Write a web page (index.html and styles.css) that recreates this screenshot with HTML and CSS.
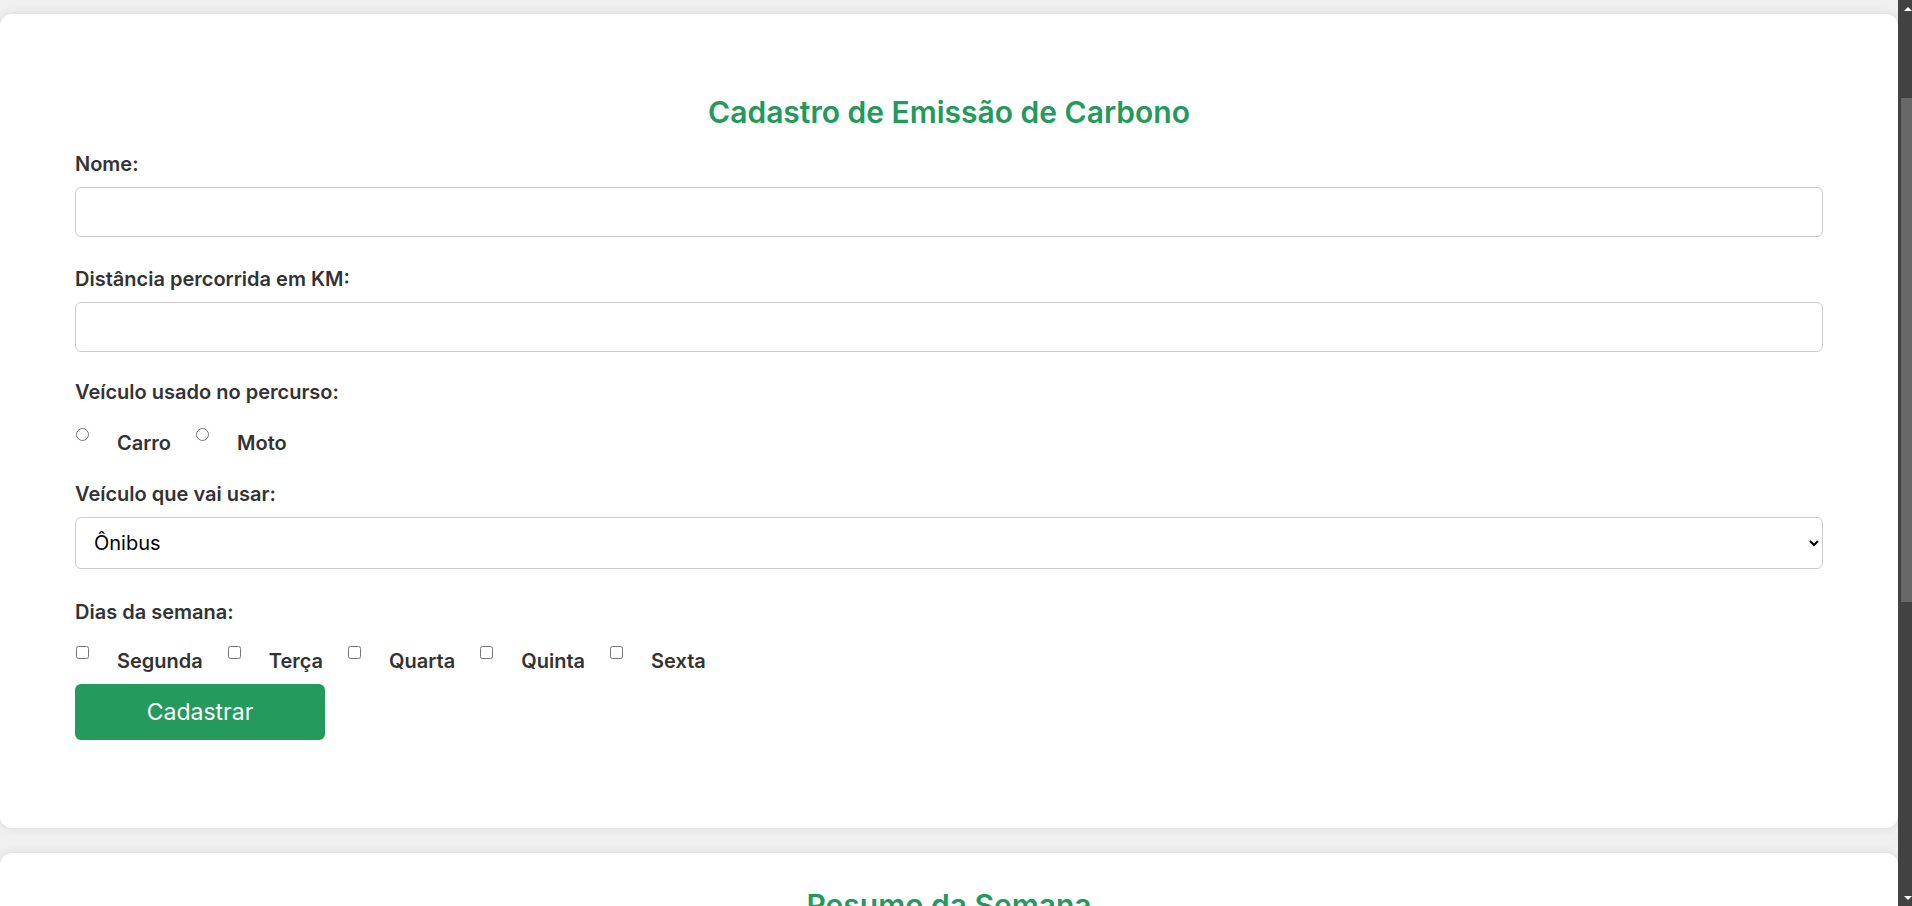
FILE: index.html
```html
<!DOCTYPE html>
<html lang="pt-BR">
<head>
<meta charset="utf-8">
<title>Cadastro de Emissão de Carbono</title>
<link rel="stylesheet" href="styles.css">
</head>
<body>
<div class="page">
  <section class="card form-card">
    <h2 class="title">Cadastro de Emissão de Carbono</h2>
    <form class="form">
      <label class="field-label label-first" for="nome">Nome:</label>
      <input class="text-input" type="text" id="nome">

      <label class="field-label label-gap" for="dist">Distância percorrida em KM:</label>
      <input class="text-input" type="text" id="dist">

      <span class="field-label label-gap-sm">Veículo usado no percurso:</span>
      <div class="choice-row radio-row">
        <input class="choice" type="radio" name="veiculo" id="carro">
        <label class="choice-label" for="carro">Carro</label>
        <input class="choice" type="radio" name="veiculo" id="moto">
        <label class="choice-label" for="moto">Moto</label>
      </div>

      <label class="field-label" for="usar">Veículo que vai usar:</label>
      <select class="select-input" id="usar">
        <option>Ônibus</option>
      </select>

      <span class="field-label label-gap-lg">Dias da semana:</span>
      <div class="choice-row check-row">
        <input class="choice" type="checkbox" id="seg">
        <label class="choice-label" for="seg">Segunda</label>
        <input class="choice" type="checkbox" id="ter">
        <label class="choice-label" for="ter">Terça</label>
        <input class="choice" type="checkbox" id="qua">
        <label class="choice-label" for="qua">Quarta</label>
        <input class="choice" type="checkbox" id="qui">
        <label class="choice-label" for="qui">Quinta</label>
        <input class="choice" type="checkbox" id="sex">
        <label class="choice-label" for="sex">Sexta</label>
      </div>

      <button class="submit" type="button">Cadastrar</button>
    </form>
  </section>

  <section class="card summary-card">
    <h2 class="title summary-title">Resumo da Semana</h2>
  </section>
</div>
<div class="scrollbar" aria-hidden="true">
  <div class="sb-button"><span class="sb-arrow sb-up"></span></div>
  <div class="sb-track"><div class="sb-thumb"></div></div>
  <div class="sb-button"><span class="sb-arrow sb-down"></span></div>
</div>
</body>
</html>
```

FILE: styles.css
```css
html,
body {
  height: 100%;
}

body {
  margin: 0;
  display: flex;
  overflow: hidden;
  background: #f0f0f0;
  font-family: Inter, "Noto Sans", "Liberation Sans", sans-serif;
  color: #333333;
}

.page {
  flex: 1;
  min-width: 0;
  height: 100vh;
  overflow: hidden;
  padding-top: 14px;
  box-sizing: border-box;
  background: #f0f0f0;
}

/* window scrollbar */
.scrollbar {
  flex: none;
  width: 14px;
  height: 100vh;
  display: flex;
  flex-direction: column;
  background: #424242;
}

.sb-button {
  flex: none;
  height: 17px;
  display: flex;
  align-items: center;
  justify-content: flex-end;
}

.sb-arrow {
  width: 0;
  height: 0;
  border-left: 4px solid transparent;
  border-right: 4px solid transparent;
}

.sb-up {
  border-bottom: 4px solid #ffffff;
  margin-top: 1px;
}

.sb-down {
  border-top: 4px solid #ffffff;
  margin-top: 1px;
}

.sb-track {
  flex: 1;
  display: flex;
  flex-direction: column;
  padding-left: 3px;
}

.sb-thumb {
  margin-top: 81px;
  height: 504px;
  background: #686868;
}

.card {
  background: #ffffff;
  border-radius: 12px;
  box-shadow: 0 0 10px rgba(0, 0, 0, 0.1);
}

.form-card {
  padding: 79px 75px 88px;
}

.summary-card {
  box-sizing: border-box;
  margin-top: 25px;
  padding: 33px 75px 0;
  min-height: 689px;
}

.title {
  margin: 0;
  text-align: center;
  color: #23995b;
  font-size: 30px;
  line-height: 39px;
  font-weight: 600;
}

.form {
  display: flex;
  flex-direction: column;
  align-items: stretch;
}

.field-label {
  display: block;
  font-size: 20px;
  line-height: 24px;
  font-weight: 600;
  color: #333333;
  margin-bottom: 11px;
}

.label-first {
  margin-top: 20px;
}

.label-gap {
  margin-top: 30px;
}

.label-gap-sm {
  margin-top: 28px;
  margin-bottom: 21px;
}

.label-gap-lg {
  margin-top: 31px;
  margin-bottom: 19px;
}

.text-input,
.select-input {
  box-sizing: border-box;
  width: 100%;
  border: 1px solid #cccccc;
  border-radius: 6px;
  background: #ffffff;
  font-family: Inter, "Noto Sans", "Liberation Sans", sans-serif;
  font-size: 20px;
  color: #000000;
}

.text-input {
  height: 50px;
  padding: 0 18px;
}

.select-input {
  height: 52px;
  padding: 0 12px 0 14px;
}

.choice-row {
  display: flex;
  align-items: flex-start;
  padding-left: 1px;
}

.radio-row {
  margin-bottom: 27px;
}

.check-row {
  margin-bottom: 11px;
}

.choice {
  margin: 3px 0 0 0;
  width: 13px;
  height: 13px;
  flex: none;
}

.choice-label {
  margin: 7px 25px 0 28px;
  font-size: 20px;
  line-height: 23px;
  font-weight: 600;
  color: #333333;
}

.submit {
  align-self: flex-start;
  width: 250px;
  height: 56px;
  border: none;
  border-radius: 6px;
  background: #249a5c;
  color: #ffffff;
  font-family: Inter, "Noto Sans", "Liberation Sans", sans-serif;
  font-size: 23px;
  font-weight: 400;
}
```
